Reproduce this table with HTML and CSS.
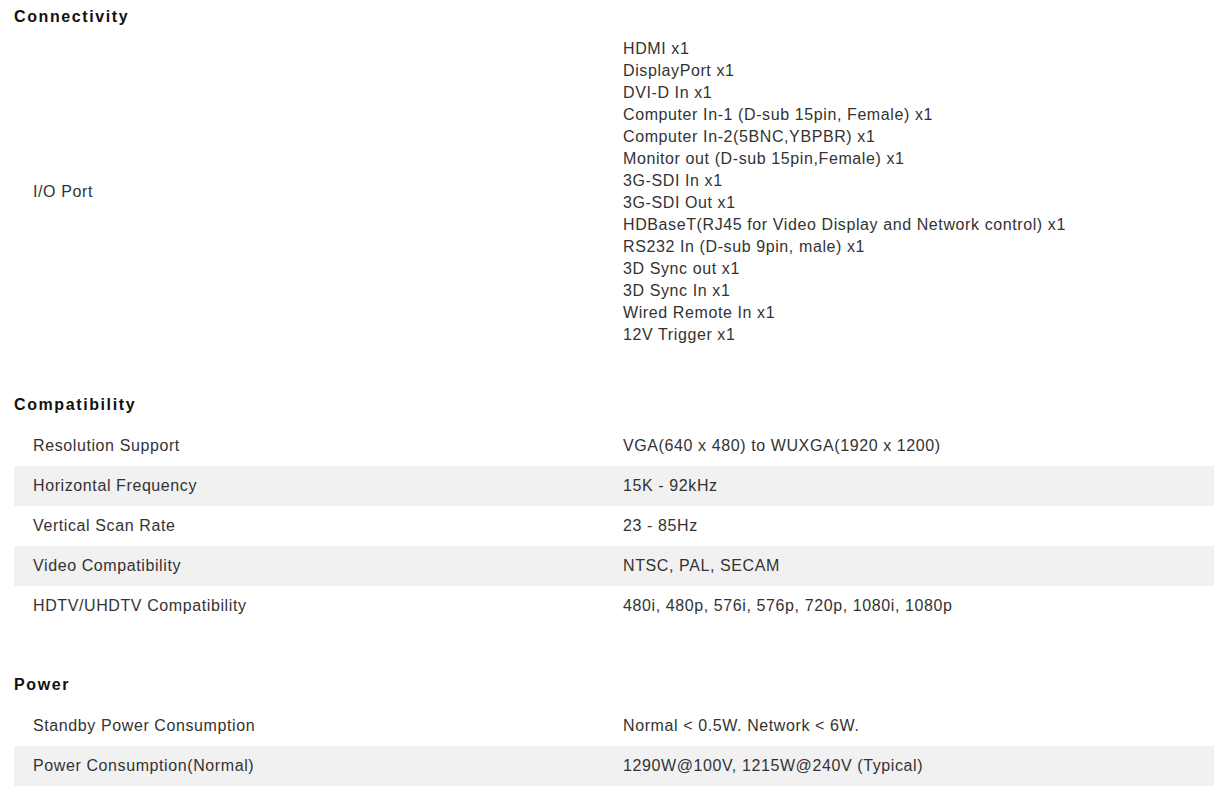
FILE: index.html
```html
<!DOCTYPE html>
<html lang="en">
<head>
<meta charset="utf-8">
<title>Specifications</title>
<link rel="stylesheet" href="styles.css">
</head>
<body>
<div class="specs">
  <section class="section">
    <h2 class="section-title">Connectivity</h2>
    <div class="rows">
      <div class="row">
        <div class="label">I/O Port</div>
        <div class="value">HDMI x1<br>DisplayPort x1<br>DVI-D In x1<br>Computer In-1 (D-sub 15pin, Female) x1<br>Computer In-2(5BNC,YBPBR) x1<br>Monitor out (D-sub 15pin,Female) x1<br>3G-SDI In x1<br>3G-SDI Out x1<br>HDBaseT(RJ45 for Video Display and Network control) x1<br>RS232 In (D-sub 9pin, male) x1<br>3D Sync out x1<br>3D Sync In x1<br>Wired Remote In x1<br>12V Trigger x1</div>
      </div>
    </div>
  </section>
  <section class="section">
    <h2 class="section-title">Compatibility</h2>
    <div class="rows">
      <div class="row"><div class="label">Resolution Support</div><div class="value">VGA(640 x 480) to WUXGA(1920 x 1200)</div></div>
      <div class="row"><div class="label">Horizontal Frequency</div><div class="value">15K - 92kHz</div></div>
      <div class="row"><div class="label">Vertical Scan Rate</div><div class="value">23 - 85Hz</div></div>
      <div class="row"><div class="label">Video Compatibility</div><div class="value">NTSC, PAL, SECAM</div></div>
      <div class="row"><div class="label">HDTV/UHDTV Compatibility</div><div class="value">480i, 480p, 576i, 576p, 720p, 1080i, 1080p</div></div>
    </div>
  </section>
  <section class="section">
    <h2 class="section-title">Power</h2>
    <div class="rows">
      <div class="row"><div class="label">Standby Power Consumption</div><div class="value">Normal &lt; 0.5W. Network &lt; 6W.</div></div>
      <div class="row"><div class="label">Power Consumption(Normal)</div><div class="value">1290W@100V, 1215W@240V (Typical)</div></div>
    </div>
  </section>
</div>
</body>
</html>
```

FILE: styles.css
```css
html, body {
  margin: 0;
  padding: 0;
  background: #ffffff;
}

body {
  font-family: "Liberation Sans", Arial, sans-serif;
  color: #333333;
}

.specs {
  width: 1200px;
  padding-left: 14px;
}

.section + .section {
  margin-top: 42px;
}

.section-title {
  margin: 0;
  height: 38px;
  line-height: 33px;
  font-size: 16px;
  font-weight: bold;
  letter-spacing: 1.6px;
  color: #111111;
}

.rows {
  display: flex;
  flex-direction: column;
}

.row {
  display: grid;
  grid-template-columns: 609px 1fr;
  align-items: center;
  min-height: 40px;
  font-size: 16px;
  line-height: 22px;
  letter-spacing: 0.6px;
}

.row:nth-child(even) {
  background: #f1f1f1;
}

.label {
  padding-left: 19px;
}
```
